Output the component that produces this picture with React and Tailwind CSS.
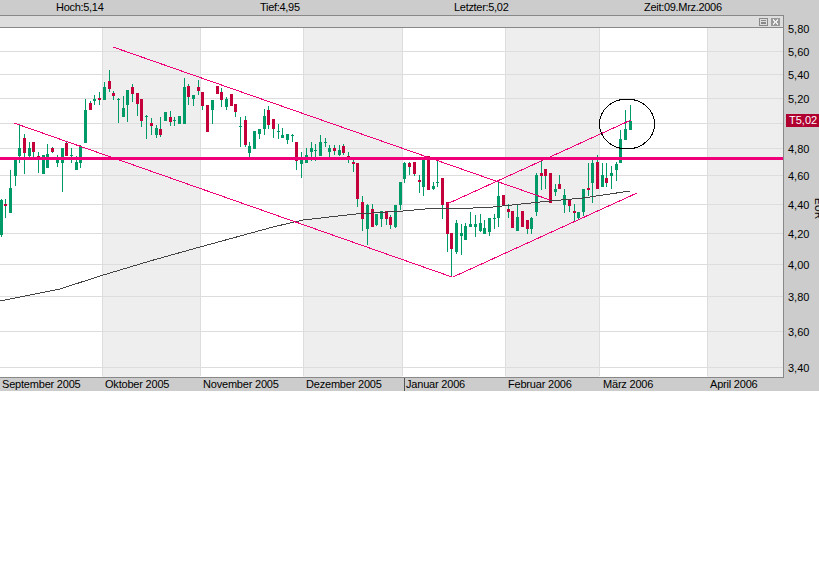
const F = '#009a68';
const R = '#c4003a';

const candles = [
  [1,199,237,200,235,'g'],[5,199,218,204,206,'r'],[10,170,213,188,213,'g'],[15,160,186,160,176,'g'],
  [19,125,163,148,156,'g'],[24,134,174,138,153,'r'],[29,142,158,148,156,'g'],[33,142,158,142,152,'r'],
  [38,152,173,156,158,'r'],[43,155,174,155,174,'g'],[47,144,168,154,168,'g'],[52,147,153,148,152,'r'],
  [57,155,167,158,163,'g'],[62,148,192,148,163,'g'],[66,141,156,143,156,'r'],[71,148,163,155,156,'g'],
  [76,156,170,162,170,'g'],[80,145,168,147,163,'g'],[85,99,143,110,143,'g'],[90,101,110,103,110,'r'],
  [94,95,105,99,101,'g'],[99,92,105,98,100,'r'],[104,82,100,87,100,'g'],[109,70,92,81,89,'r'],
  [113,91,100,93,96,'r'],[118,98,123,99,100,'g'],[123,96,117,108,117,'g'],[127,90,122,90,105,'g'],
  [132,84,102,87,94,'r'],[137,93,116,93,104,'r'],[141,99,127,99,121,'r'],[146,115,139,116,117,'g'],
  [151,118,135,123,126,'r'],[156,125,138,128,135,'g'],[160,117,137,129,135,'r'],[165,112,121,112,121,'g'],
  [170,111,126,117,122,'r'],[174,117,126,120,121,'g'],[179,116,124,116,124,'g'],[184,78,124,87,124,'g'],
  [188,84,105,86,97,'r'],[193,95,106,95,99,'g'],[198,80,95,87,91,'r'],[202,92,110,92,106,'r'],
  [207,105,132,105,132,'r'],[212,100,124,100,110,'g'],[217,86,94,86,94,'r'],[221,88,107,92,100,'r'],
  [226,97,110,99,107,'g'],[231,94,106,94,106,'r'],[235,104,117,104,112,'r'],[240,117,147,126,127,'g'],
  [245,116,147,120,145,'r'],[249,142,157,146,153,'g'],[254,131,149,131,149,'g'],[259,129,139,129,134,'g'],
  [264,109,135,116,129,'g'],[268,106,129,110,125,'r'],[273,119,138,119,129,'r'],[278,124,139,131,132,'g'],
  [282,128,138,135,138,'g'],[287,134,144,134,140,'g'],[292,134,142,135,136,'g'],[296,142,170,142,161,'r'],
  [301,152,178,160,164,'g'],[306,148,163,155,163,'g'],[311,142,161,148,152,'g'],[315,144,161,150,151,'g'],
  [320,135,156,142,156,'g'],[325,138,147,142,143,'g'],[329,145,157,148,152,'g'],[334,145,155,148,151,'r'],
  [339,145,156,150,155,'g'],[343,144,155,146,153,'r'],[348,152,163,156,158,'r'],[353,158,172,162,164,'r'],
  [357,163,207,163,199,'r'],[362,196,231,202,219,'r'],[367,204,245,205,229,'g'],[372,204,227,209,227,'r'],
  [376,214,226,214,225,'g'],[381,211,227,211,219,'g'],[386,211,225,211,219,'r'],[390,215,229,217,225,'r'],
  [395,205,228,205,227,'g'],[400,182,210,182,205,'g'],[404,162,183,163,179,'g'],[409,162,175,163,167,'r'],
  [414,162,176,162,174,'r'],[419,175,193,180,182,'r'],[423,159,196,159,187,'g'],[428,156,190,156,190,'r'],
  [433,182,190,186,189,'g'],[437,161,187,182,183,'g'],[442,178,219,178,205,'r'],[447,202,252,202,234,'r'],
  [451,233,277,233,249,'r'],[456,220,254,223,252,'g'],[461,224,255,233,236,'g'],[465,223,240,226,240,'g'],
  [470,212,227,224,227,'g'],[475,215,237,224,227,'g'],[480,214,232,223,231,'g'],[484,220,234,228,234,'g'],
  [489,218,236,218,232,'g'],[494,214,229,218,219,'g'],[498,180,227,196,218,'g'],[503,195,206,195,206,'r'],
  [508,204,218,209,212,'r'],[512,211,228,211,228,'r'],[517,205,231,217,231,'g'],[522,211,227,211,227,'r'],
  [527,220,234,220,229,'r'],[531,217,234,218,229,'g'],[536,173,216,175,212,'g'],[541,160,190,173,176,'r'],
  [545,169,189,169,176,'r'],[550,173,203,173,203,'r'],[555,184,196,189,192,'g'],[559,175,189,184,189,'r'],
  [564,189,213,195,205,'g'],[569,199,212,199,206,'r'],[574,204,221,211,213,'r'],[578,212,220,212,218,'g'],
  [583,189,216,189,212,'g'],[588,163,196,188,190,'r'],[592,159,203,163,183,'g'],[597,155,189,162,189,'r'],
  [602,163,187,175,187,'g'],[606,163,187,178,183,'r'],[611,166,189,173,176,'g'],[616,162,181,164,170,'g'],
  [620,130,163,139,163,'g'],[625,110,140,129,140,'g'],[630,105,130,121,130,'g'],
];

const gridY = [51, 74, 98, 123, 148, 175, 204, 233, 264, 296, 331, 367];
const bands = [[102, 98], [303, 99], [505, 94], [707, 76]];
const vLines = [102, 200, 303, 402, 505, 599, 707];
const ma = '0,301 60,289 100,276 150,261 200,247 273,227 303,220 356,214 403,211 436,208 473,208 493,207 550,201 583,198 630,191';

const axis = [
  ['5,80', 'h-[20px]'], ['5,60', 'h-[23px]'], ['5,40', 'h-[23px]'], ['5,20', 'h-[24px]'], ['', 'h-[25px]'],
  ['4,80', 'h-[25px]'], ['4,60', 'h-[27px]'], ['4,40', 'h-[29px]'], ['4,20', 'h-[29px]'], ['4,00', 'h-[31px]'],
  ['3,80', 'h-[32px]'], ['3,60', 'h-[35px]'], ['3,40', 'h-[36px]'],
];

const months = [
  ['September 2005', 'w-[105px] pl-[2px]'], ['Oktober 2005', 'w-[98px]'], ['November 2005', 'w-[103px]'],
  ['Dezember 2005', 'w-[98px]'], ['Januar 2006', 'w-[104px] border-l border-[#555] pl-[1px]'],
  ['Februar 2006', 'w-[95px]'], ['März 2006', 'w-[107px]'], ['April 2006', 'w-[100px]'],
];

function Chart() {
  return (
    <svg width="783" height="349" viewBox="0 28 783 349" shapeRendering="crispEdges" className="block">
      <rect x="0" y="28" width="783" height="349" fill="#fff" />
      {bands.map(([x, w]) => <rect key={x} x={x} y="28" width={w} height="349" fill="#eeeeee" />)}
      {gridY.map((y) => <rect key={y} x="0" y={y} width="783" height="1" fill="#dddddd" />)}
      {vLines.map((x) => <rect key={x} x={x} y="28" width="1" height="348" fill="#dddddd" />)}
      {candles.map(([x, wt, wb, bt, bb, c]) => (
        <g key={x}>
          <rect x={x} y={wt} width="1" height={wb - wt} fill={F} />
          <rect x={x - 1} y={bt} width="3" height={bb - bt} fill={c === 'g' ? F : R} />
        </g>
      ))}
      <polyline points={ma} fill="none" stroke="#444444" strokeWidth="1" />
      <g stroke="#f00078" strokeWidth="1">
        <line x1="14" y1="123" x2="452" y2="277" />
        <line x1="113" y1="47" x2="550" y2="200" />
        <line x1="453" y1="277" x2="637" y2="193" />
        <line x1="447" y1="204" x2="631" y2="120" />
      </g>
      <rect x="0" y="157" width="783" height="3" fill="#f00078" />
      <ellipse cx="627" cy="124" rx="27.5" ry="25" fill="none" stroke="#000" strokeWidth="1" />
    </svg>
  );
}

export default function App() {
  return (
    <div className="relative w-[819px] h-[565px] overflow-hidden bg-white text-[11px] leading-[13px] text-black font-['Liberation_Sans',Arial,sans-serif]">
      <div className="flex h-[15px] items-center bg-[#cccccc] pl-[56px] tracking-[-0.3px]">
        <div className="w-[204px]">Hoch:5,14</div>
        <div className="w-[194px]">Tief:4,95</div>
        <div className="w-[190px]">Letzter:5,02</div>
        <div>Zeit:09.Mrz.2006</div>
      </div>
      <div className="flex h-[363px]">
        <div className="flex w-[784px] flex-col border-y border-r border-[#888888]">
          <div className="flex h-[12px] items-start justify-end gap-[3px] border-b border-[#888888] bg-[#dddddd] pr-[3px] pt-[2px]">
            <svg width="9" height="8" viewBox="0 0 9 8" shapeRendering="crispEdges">
              <rect x="0.5" y="0.5" width="8" height="7" fill="none" stroke="#888" />
              <path d="M2 2.5H7M2 4H7M2 5.5H7" stroke="#888" />
            </svg>
            <svg width="9" height="8" viewBox="0 0 9 8" shapeRendering="crispEdges">
              <rect x="0" y="0" width="9" height="8" fill="#999" />
              <path d="M2 1.5L7 6.5M7 1.5L2 6.5" stroke="#eee" strokeWidth="1.2" />
            </svg>
          </div>
          <Chart />
        </div>
        <div className="relative flex-1 bg-[#cccccc] pl-[4px] pt-[1px]">
          {axis.map(([t, h], i) => (
            <div key={i} className={`${h} flex items-end`}>{t}</div>
          ))}
          <div className="absolute left-[2px] top-[99px] h-[13px] w-[33px] bg-[#b0002f] pl-[3px] text-white">T5,02</div>
          <div className="absolute left-[28px] top-[183px] [writing-mode:vertical-rl] text-[10px]">EUR</div>
        </div>
      </div>
      <div className="flex h-[13px] items-center overflow-hidden whitespace-nowrap bg-[#cccccc] tracking-[-0.2px]">
        {months.map(([t, c]) => <div key={t} className={`${c} shrink-0`}>{t}</div>)}
      </div>
    </div>
  );
}
